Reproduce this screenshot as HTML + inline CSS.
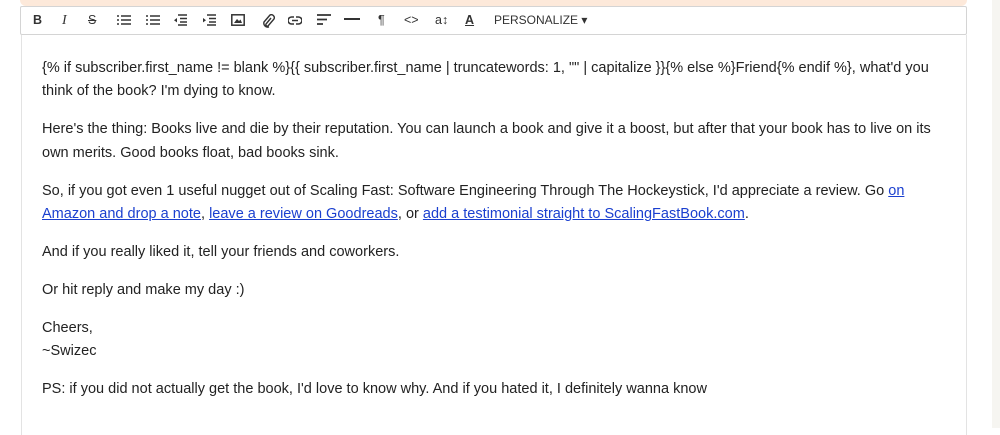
<!DOCTYPE html>
<html><head><style>
body{margin:0;width:1000px;height:428px;background:#fff;position:relative;overflow:hidden;font-family:"Liberation Sans",Arial,sans-serif}
.peach{position:absolute;left:20px;top:0;width:947px;height:6px;background:#fde9da;border-radius:0 0 8px 8px}
.strip{position:absolute;left:992px;top:0;width:8px;height:428px;background:#f6f5f1}
.tb{position:absolute;left:20px;top:6px;width:945px;height:27px;border:1px solid #d4d4d4;border-radius:2px;background:#fff}
.tb span{position:absolute;top:6px;font-size:12.5px;color:#333}
.tb svg{position:absolute;top:7px}
.box{position:absolute;left:21px;top:35px;width:944px;height:400px;border-left:1px solid #e3e3e3;border-right:1px solid #e3e3e3}
.c{position:absolute;left:42px;top:57px;width:895px;font-size:14.52px;line-height:23.4px;color:#222}
.c p{margin:0 0 14.5px}
a{color:#1a3fcf;text-decoration:underline}
</style></head><body>
<div class="peach"></div><div class="strip"></div>
<div class="tb">
<span style="left:12px;font-weight:bold">B</span>
<span style="left:41px;font-style:italic;font-family:'Liberation Serif';font-size:14px">I</span>
<span style="left:67px;text-decoration:line-through">S</span>
<svg style="left:96px" width="14" height="12" stroke="#333" stroke-width="1.6"><path d="M0 2h2M4 2h10M0 6h2M4 6h10M0 10h2M4 10h10"/></svg>
<svg style="left:125px" width="14" height="12" stroke="#333" stroke-width="1.6"><path d="M0 2h2M4 2h10M0 6h2M4 6h10M0 10h2M4 10h10"/></svg>
<svg style="left:152px" width="14" height="12" stroke="#333" stroke-width="1.6"><path d="M5 1h9M7 4.5h7M7 8h7M5 11h9"/><path d="M4 4l-3 2.2 3 2.2z" fill="#333" stroke="none"/></svg>
<svg style="left:181px" width="14" height="12" stroke="#333" stroke-width="1.6"><path d="M5 1h9M7 4.5h7M7 8h7M5 11h9"/><path d="M1 4l3 2.2-3 2.2z" fill="#333" stroke="none"/></svg>
<svg style="left:210px" width="14" height="12"><rect x="0.8" y="0.8" width="12.4" height="10.4" fill="none" stroke="#333" stroke-width="1.5"/><path d="M3 9l3-4 2 2 1.5-1.5L11 9z" fill="#333"/></svg>
<svg style="left:240px" width="14" height="14" fill="none" stroke="#333" stroke-width="1.4"><path d="M10 4L5 10a1.5 1.5 0 0 0 2 2l6-7a3 3 0 0 0-4-4L3 8a4 4 0 0 0 5 5"/></svg>
<svg style="left:267px;top:9px" width="14" height="9" fill="none" stroke="#333" stroke-width="1.6"><path d="M6 1H3.5a3.5 3.5 0 0 0 0 7H6M8 1h2.5a3.5 3.5 0 0 1 0 7H8M4 4.5h6"/></svg>
<svg style="left:296px" width="14" height="11" stroke="#333" stroke-width="1.8"><path d="M0 1h14M0 5.5h10M0 10h6"/></svg>
<svg style="left:323px;top:11px" width="16" height="3"><rect width="16" height="2" fill="#333"/></svg>
<span style="left:357px">¶</span>
<span style="left:383px">&lt;&gt;</span>
<span style="left:414px">a↕</span>
<span style="left:444px;text-decoration:underline;font-weight:bold">A</span>
<span style="left:473px;font-size:12px">PERSONALIZE ▾</span>
</div>
<div class="box"></div>
<div class="c">
<p>{% if subscriber.first_name != blank %}{{ subscriber.first_name | truncatewords: 1, "" | capitalize }}{% else %}Friend{% endif %}, what'd you think of the book? I'm dying to know.</p>
<p>Here's the thing: Books live and die by their reputation. You can launch a book and give it a boost, but after that your book has to live on its own merits. Good books float, bad books sink.</p>
<p>So, if you got even 1 useful nugget out of Scaling Fast: Software Engineering Through The Hockeystick, I'd appreciate a review. Go <a>on Amazon and drop a note</a>, <a>leave a review on Goodreads</a>, or <a>add a testimonial straight to ScalingFastBook.com</a>.</p>
<p>And if you really liked it, tell your friends and coworkers.</p>
<p>Or hit reply and make my day :)</p>
<p>Cheers,<br>~Swizec</p>
<p>PS: if you did not actually get the book, I'd love to know why. And if you hated it, I definitely wanna know</p>
</div>
</body></html>
